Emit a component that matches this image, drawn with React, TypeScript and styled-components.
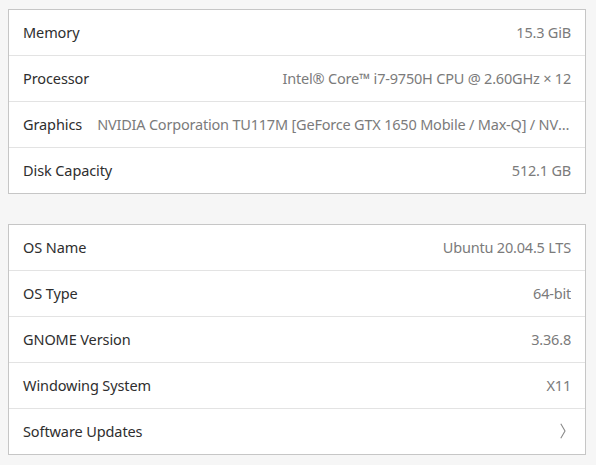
import React from "react";
import styled, { createGlobalStyle } from "styled-components";

const GlobalStyle = createGlobalStyle`
  html, body {
    margin: 0;
    padding: 0;
    background: #f6f6f6;
  }
  body {
    font-family: "Noto Sans", "Open Sans", sans-serif;
    -webkit-font-smoothing: antialiased;
  }
`;

const SPage = styled.div`
  display: flex;
  flex-direction: column;
  gap: 30px;
  padding: 9px 10px 11px 8px;
`;

const SCard = styled.div`
  display: flex;
  flex-direction: column;
  background: #ffffff;
  border: 1px solid #c6c6c6;
`;

const SRow = styled.div`
  display: flex;
  align-items: center;
  gap: 15px;
  box-sizing: border-box;
  height: 45px;
  padding: 0 14px 2px;
  font-size: 14.5px;
  & + & {
    height: 46px;
    border-top: 1px solid #e3e3e3;
  }
`;

const SLabel = styled.span`
  flex: none;
  color: #2e2e2e;
  letter-spacing: -0.1px;
  white-space: nowrap;
`;

const SValue = styled.span`
  flex: 1;
  min-width: 0;
  color: #7b7b7b;
  letter-spacing: -0.2px;
  text-align: right;
  white-space: nowrap;
  overflow: hidden;
  text-overflow: ellipsis;
`;

const SChevron = styled.svg`
  flex: none;
  margin-left: auto;
  margin-right: 5px;
`;

const hardware = [
  { label: "Memory", value: "15.3 GiB" },
  { label: "Processor", value: "Intel® Core™ i7-9750H CPU @ 2.60GHz × 12" },
  {
    label: "Graphics",
    value:
      "NVIDIA Corporation TU117M [GeForce GTX 1650 Mobile / Max-Q] / NVIDIA Corporation",
  },
  { label: "Disk Capacity", value: "512.1 GB" },
];

const system = [
  { label: "OS Name", value: "Ubuntu 20.04.5 LTS" },
  { label: "OS Type", value: "64-bit" },
  { label: "GNOME Version", value: "3.36.8" },
  { label: "Windowing System", value: "X11" },
];

const Chevron = () => (
  <SChevron width="6" height="16" viewBox="0 0 6 16">
    <polyline
      points="0.8,0.8 5,8 0.8,15.2"
      fill="none"
      stroke="#8a8a8a"
      strokeWidth="1.1"
    />
  </SChevron>
);

export default function App() {
  return (
    <>
      <GlobalStyle />
      <SPage>
        <SCard>
          {hardware.map((item) => (
            <SRow key={item.label}>
              <SLabel>{item.label}</SLabel>
              <SValue>{item.value}</SValue>
            </SRow>
          ))}
        </SCard>
        <SCard>
          {system.map((item) => (
            <SRow key={item.label}>
              <SLabel>{item.label}</SLabel>
              <SValue>{item.value}</SValue>
            </SRow>
          ))}
          <SRow>
            <SLabel>Software Updates</SLabel>
            <Chevron />
          </SRow>
        </SCard>
      </SPage>
    </>
  );
}
